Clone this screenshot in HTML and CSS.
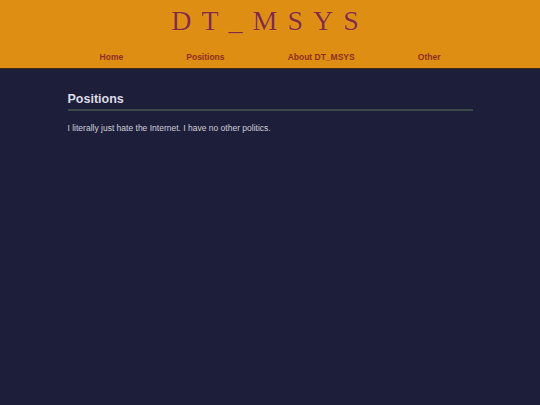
FILE: index.html
```html
<!DOCTYPE html>
<html>
<head>
<meta charset="utf-8">
<link rel="stylesheet" href="styles.css">
</head>
<body>
<header class="site-header">
  <h1 class="site-title">DT_MSYS</h1>
  <nav class="site-nav">
    <a href="#">Home</a>
    <a href="#">Positions</a>
    <a href="#">About DT_MSYS</a>
    <a href="#">Other</a>
  </nav>
</header>
<main class="content">
  <h2 class="page-title">Positions</h2>
  <p class="text">I literally just hate the Internet. I have no other politics.</p>
</main>
</body>
</html>
```
FILE: styles.css
```css
html, body {
  margin: 0;
  padding: 0;
  background: #1d1e3a;
  height: 100%;
}
body {
  font-family: "Liberation Sans", Arial, sans-serif;
}
.site-header {
  background: #de8e13;
  height: 68px;
  border-bottom: 1px solid #3a2a1a;
  box-sizing: content-box;
}
.site-title {
  margin: 0;
  padding-top: 5px;
  text-align: center;
  font-family: "Liberation Serif", "Times New Roman", serif;
  font-weight: normal;
  font-size: 28px;
  line-height: 32px;
  letter-spacing: 10px;
  color: #862a3c;
  text-shadow: 0 0 1px rgba(255, 220, 150, 0.6);
}
.site-nav {
  width: 404px;
  margin: 14px auto 0;
  display: flex;
  justify-content: space-around;
}
.site-nav a {
  font-size: 8.5px;
  font-weight: bold;
  color: #8e2f22;
  text-decoration: none;
  line-height: 12px;
}
.content {
  width: 405px;
  margin: 0 auto;
  padding-top: 22px;
}
.page-title {
  margin: 0;
  font-size: 12.5px;
  font-weight: bold;
  color: #dcdce4;
  line-height: 16px;
  padding-bottom: 2px;
  border-bottom: 2px solid #3b4a47;
}
.text {
  margin: 11px 0 0;
  font-size: 8.5px;
  line-height: 12px;
  color: #d0d0dc;
}
```
